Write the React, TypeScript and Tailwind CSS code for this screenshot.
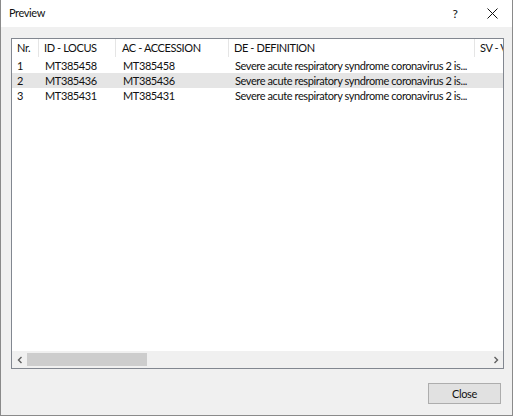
import React from 'react';

type Row = { nr: number; locus: string; accession: string; definition: string };

const rows: Row[] = [
  { nr: 1, locus: 'MT385458', accession: 'MT385458', definition: 'Severe acute respiratory syndrome coronavirus 2 is...' },
  { nr: 2, locus: 'MT385436', accession: 'MT385436', definition: 'Severe acute respiratory syndrome coronavirus 2 is...' },
  { nr: 3, locus: 'MT385431', accession: 'MT385431', definition: 'Severe acute respiratory syndrome coronavirus 2 is...' },
];

const font = { fontFamily: 'Lato, "Noto Sans", sans-serif' };

const App: React.FC = () => {
  return (
    <div
      className="flex flex-col w-[513px] h-[416px] bg-[#f0f0f0] border-x border-b border-[#8a8a8a] text-[11px] tracking-[-0.4px] text-[#111] overflow-hidden"
      style={font}
    >
      {/* title bar */}
      <div className="flex items-center h-[27px] bg-white pl-[8px] shrink-0">
        <span className="flex-1">Preview</span>
        <span className="w-[34px] text-center text-[12px]">?</span>
        <div className="flex items-center justify-center w-[40px]">
          <svg width="11" height="11" viewBox="0 0 11 11">
            <path d="M0.5 0.5 L10.5 10.5 M10.5 0.5 L0.5 10.5" stroke="#111" strokeWidth="1" fill="none" />
          </svg>
        </div>
      </div>

      <div className="flex flex-col flex-1 px-[10px] pt-[11px]">
        {/* list view */}
        <div className="flex flex-col w-[493px] h-[331px] border border-[#828790] bg-white">
          <div className="flex-1 overflow-hidden">
            <div className="flex h-[18px] items-stretch">
              <div className="w-[27px] shrink-0 pl-[5px] border-r border-[#e5e5e5] leading-[18px]">Nr.</div>
              <div className="w-[77px] shrink-0 pl-[5px] border-r border-[#e5e5e5] leading-[18px]">ID - LOCUS</div>
              <div className="w-[113px] shrink-0 pl-[6px] border-r border-[#e5e5e5] leading-[18px]">AC - ACCESSION</div>
              <div className="w-[246px] shrink-0 pl-[5px] border-r border-[#e5e5e5] leading-[18px]">DE - DEFINITION</div>
              <div className="w-[28px] shrink-0 pl-[5px] leading-[18px] whitespace-nowrap overflow-hidden">SV - VERSION</div>
            </div>
            <div className="pt-[1px]">
              {rows.map((r) => (
                <div
                  key={r.nr}
                  className={`flex h-[15px] leading-[15px] whitespace-nowrap ${r.nr === 2 ? 'bg-[#e5e5e5]' : ''}`}
                >
                  <div className="w-[28px] shrink-0 pl-[5px]">{r.nr}</div>
                  <div className="w-[77px] shrink-0 pl-[5px]">{r.locus}</div>
                  <div className="w-[113px] shrink-0 pl-[6px]">{r.accession}</div>
                  <div className="w-[246px] shrink-0 pl-[5px] overflow-hidden">{r.definition}</div>
                </div>
              ))}
            </div>
          </div>

          {/* horizontal scrollbar */}
          <div className="flex items-center h-[17px] bg-[#f0f0f0] shrink-0">
            <div className="flex items-center justify-center w-[15px] h-full">
              <svg width="6" height="8" viewBox="0 0 6 8">
                <path d="M4.5 1 L1.5 4 L4.5 7" stroke="#606060" strokeWidth="1.4" fill="none" />
              </svg>
            </div>
            <div className="flex-1 h-full flex items-center">
              <div className="w-[120px] h-[13px] bg-[#cdcdcd]" />
            </div>
            <div className="flex items-center justify-center w-[15px] h-full">
              <svg width="6" height="8" viewBox="0 0 6 8">
                <path d="M1.5 1 L4.5 4 L1.5 7" stroke="#606060" strokeWidth="1.4" fill="none" />
              </svg>
            </div>
          </div>
        </div>

        <div className="flex justify-end pt-[14px] pr-[1px]">
          <button className="w-[73px] h-[21px] border border-[#adadad] bg-[#e1e1e1] leading-[19px]">
            Close
          </button>
        </div>
      </div>
    </div>
  );
};

export default App;
